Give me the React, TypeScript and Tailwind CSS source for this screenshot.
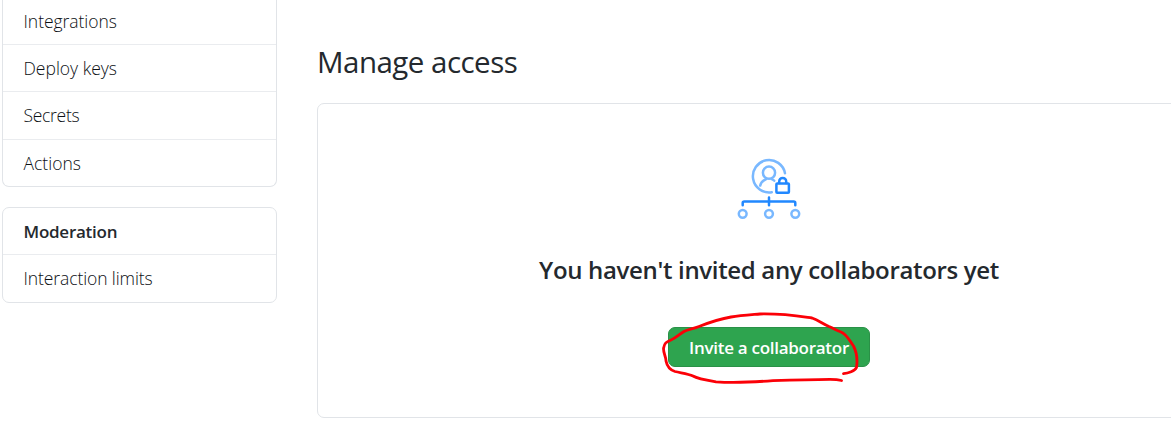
import React from "react";

const topItems = [
  { label: "Integrations", box: "h-[45px] pb-[1px]", text: "tracking-[-0.05px]" },
  { label: "Deploy keys", box: "h-[47px] pt-[1px]", text: "tracking-[0px]" },
  { label: "Secrets", box: "h-[48px]", text: "tracking-[-0.3px]" },
  { label: "Actions", box: "h-[47px]", text: "tracking-[0px]" },
];

function Sidebar() {
  return (
    <nav className="ml-[2px] w-[275px] shrink-0 text-[17.5px] text-[#0c1014]">
      <ul className="h-[187px] rounded-b-[7px] border border-t-0 border-[#e1e4e8]">
        {topItems.map((item) => (
          <li
            key={item.label}
            className={`flex items-center border-b border-[#eaecef] pl-[20.5px] last:border-b-0 ${item.box}`}
          >
            <span className={`whitespace-nowrap font-light ${item.text}`}>{item.label}</span>
          </li>
        ))}
      </ul>
      <ul className="mt-[20px] h-[96px] rounded-[7px] border border-[#e1e4e8]">
        <li className="flex h-[47px] items-center border-b border-[#eaecef] pl-[20.5px] pt-[1px]">
          <span className="whitespace-nowrap text-[17px] font-semibold tracking-[-0.25px] text-[#24292e]">Moderation</span>
        </li>
        <li className="flex h-[47px] items-center pl-[20.5px]">
          <span className="whitespace-nowrap font-light tracking-[-0.1px]">Interaction limits</span>
        </li>
      </ul>
    </nav>
  );
}

function AccessIcon() {
  return (
    <svg
      className="h-[70px] w-[70px]"
      viewBox="734 154 70 70"
      fill="none"
      strokeLinecap="round"
      strokeLinejoin="round"
      strokeWidth="2.5"
    >
      <g stroke="#79b8ff">
        <path d="M785 173.2A16.2 16.2 0 1 0 771.8 192.2" />
        <circle cx="769" cy="172.7" r="6.1" />
        <path d="M760.2 185.6C761 182.2 763.4 180.3 766.2 179.1M771.6 179.1C772.6 179.4 773.5 180 774.2 180.6" />
        <circle cx="742.7" cy="213.8" r="3.9" />
        <circle cx="769" cy="213.8" r="3.9" />
        <circle cx="795.3" cy="213.8" r="3.9" />
      </g>
      <g stroke="#2188ff">
        <rect x="776.4" y="183.4" width="12.5" height="9.4" rx="0.8" />
        <path d="M779.2 183v-1.600a3.500 3.500 0 0 1 7 0v1.600" />
        <path d="M742.7 205.3v-2.200q0-1.600 1.600-1.600h49.400q1.600 0 1.600 1.600v2.200M769 197.4v7.900" />
      </g>
    </svg>
  );
}

export default function App() {
  return (
    <div className="flex h-[440px] w-full overflow-hidden bg-white font-['Open_Sans','Noto_Sans',sans-serif]">
      <Sidebar />
      <main className="ml-[40px] w-[904px] shrink-0 pt-[42px] text-[#24292e]">
        <h2 className="h-[61px] whitespace-nowrap text-[29.5px] font-normal leading-[40px] tracking-[-0.52px]">
          Manage access
        </h2>
        <section className="flex h-[315px] flex-col items-center rounded-[7px] border border-[#e1e4e8] pt-[50px]">
          <AccessIcon />
          <h3 className="mt-[28px] whitespace-nowrap text-[24px] font-semibold leading-[36px] tracking-[-0.33px]">
            You haven't invited any collaborators yet
          </h3>
          <div className="relative mt-[39px] h-[40px] w-[202px]">
            <button className="flex h-full w-full items-center justify-center rounded-[7px] border border-[#2a9147] bg-[#2ea44f] pt-[2px] text-[17px] font-semibold tracking-[-0.28px] text-white">
              <span className="whitespace-nowrap">Invite a collaborator</span>
            </button>
            <svg
              className="pointer-events-none absolute -left-[8px] -top-[17px] h-[80px] w-[210px]"
              viewBox="660 310 210 80"
              fill="none"
              stroke="#fb0007"
              strokeWidth="2.8"
              strokeLinecap="round"
              strokeLinejoin="round"
            >
              <path d="M843.5 373.7C848 373.3 855 371 856.5 367.5C857.5 361 856.5 352 853.5 346C849 340 847 334.500 841 332C836 330.500 834 328.500 829 326.500C822 323.500 819 320.500 812 318C798 316 784 313.500 760 314C748 315 740 315.500 731 317C719 319 708 323 699 326.500C693 329 688 329 684 331.500C679 334.500 676 338 671 340C666 342 664.500 343 663.600 348C663 353 666 356 666 361C667 366 670 370 675 371.500C681 373 688 373.500 693 376C698 379 708 380.500 716 381.800C733 383 755 382 773 380.600C793 380 812 379.500 830 379.300C835 379.300 838 379.500 841.500 380.500" />
            </svg>
          </div>
        </section>
      </main>
    </div>
  );
}
